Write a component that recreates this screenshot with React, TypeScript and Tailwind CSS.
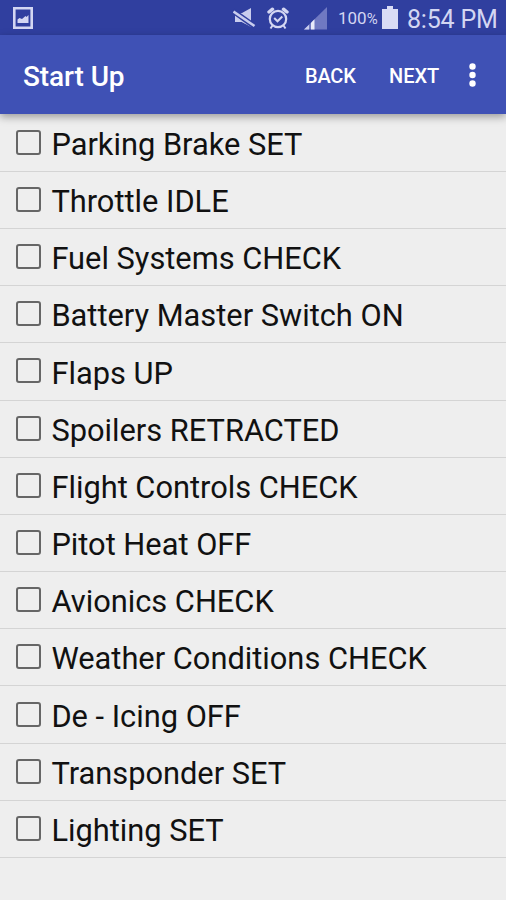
import { useState } from "react";

const checklist = [
  "Parking Brake SET",
  "Throttle IDLE",
  "Fuel Systems CHECK",
  "Battery Master Switch ON",
  "Flaps UP",
  "Spoilers RETRACTED",
  "Flight Controls CHECK",
  "Pitot Heat OFF",
  "Avionics CHECK",
  "Weather Conditions CHECK",
  "De - Icing OFF",
  "Transponder SET",
  "Lighting SET",
];

function PictureIcon() {
  return (
    <svg className="w-5 h-[22px] mt-px" viewBox="0 0 20 22">
      <path d="M1.3 1.3h17.4v19.4H1.3z" fill="none" stroke="#d3d6f2" strokeWidth="2.6" />
      <path d="M4.5 16v-3.5l2-1.5 2.5 1 3.5-3 1 1 2-2v8z" fill="#d3d6f2" />
    </svg>
  );
}

function MuteIcon() {
  return (
    <svg className="w-[23px] h-[21px]" viewBox="0 0 23 21">
      <path d="M2 6h7l9-5v19l-9-5H2z" fill="#c9cdee" />
      <path d="M0 4l21 15" stroke="#303f9f" strokeWidth="5.4" />
      <path d="M.5 4.5l21 14.500" stroke="#c9cdee" strokeWidth="2.6" />
      <path d="M2 9.500v5.500h7l4.500 2.500z" fill="#c9cdee" />
    </svg>
  );
}

function AlarmIcon() {
  return (
    <svg className="w-[22px] h-[23px]" viewBox="0 0 22 23" fill="none" stroke="#d3d6f2">
      <circle cx="11" cy="12" r="8.2" strokeWidth="2.2" />
      <path d="M2 5l3.500-2.800M20 5l-3.500-2.800" strokeWidth="3.4" strokeLinecap="round" />
      <path d="M7.2 11l3.300 3.300 4.800-4.800" strokeWidth="2" />
      <path d="M5.500 18.500l-2 3M16.500 18.500l2 3" strokeWidth="2" />
    </svg>
  );
}

function SignalIcon() {
  return (
    <svg className="w-[23px] h-[23px]" viewBox="0 0 23 23">
      <path d="M0 22.500L23 0v22.500z" fill="#7079c2" />
      <path d="M0 22.500l5-4.800v4.800z" fill="#c9cdee" />
      <path d="M7 22.500v-6.800l3.500-3.500v10.300z" fill="#e8eafa" />
    </svg>
  );
}

function BatteryIcon() {
  return (
    <svg className="w-4 h-[23px]" viewBox="0 0 16 23">
      <path d="M5 0h6v3h5v20H0V3h5z" fill="#d9dbf5" />
    </svg>
  );
}

function StatusBar() {
  return (
    <div className="h-[35px] bg-[#303f9f] flex items-center justify-between pl-[13px] pr-[8px] text-[#d3d6f2]">
      <PictureIcon />
      <div className="flex items-center">
        <MuteIcon />
        <div className="ml-[11px] mr-[15px] pt-[2px]">
          <AlarmIcon />
        </div>
        <div className="pt-[2px]">
          <SignalIcon />
        </div>
        <span className="ml-[11px] mr-1 w-10 text-[17px] whitespace-nowrap pt-[3px]">
          100<span className="text-[15px]">%</span>
        </span>
        <BatteryIcon />
        <span className="ml-[9px] w-[91px] text-[25px] leading-none tracking-[-0.2px] whitespace-nowrap pt-[3px]">
          8:54 PM
        </span>
      </div>
    </div>
  );
}

function Toolbar() {
  return (
    <header className="relative z-10 h-[79px] bg-[#3f51b5] flex items-center pl-[23px] pr-[30px] text-white font-medium shadow-[0_3px_8px_rgba(0,0,0,0.35)]">
      <h1 className="flex-1 text-[28px] tracking-[-0.1px] pt-[4px]">Start Up</h1>
      <button className="w-[52px] text-[20px] tracking-[-0.2px] text-left whitespace-nowrap pt-[2px]">
        BACK
      </button>
      <button className="ml-8 w-[52px] text-[20px] text-left whitespace-nowrap pt-[2px]">
        NEXT
      </button>
      <button className="ml-[28px] w-[7px]" aria-label="More options">
        <svg className="w-[7px] h-6" viewBox="0 0 7 24" fill="#fff">
          <circle cx="3.5" cy="3.5" r="3.2" />
          <circle cx="3.5" cy="12" r="3.2" />
          <circle cx="3.5" cy="20.5" r="3.2" />
        </svg>
      </button>
    </header>
  );
}

export default function App() {
  const [checked, setChecked] = useState<string[]>([]);

  function toggle(item: string) {
    setChecked((prev) =>
      prev.includes(item) ? prev.filter((i) => i !== item) : [...prev, item]
    );
  }

  return (
    <div className="w-full h-screen overflow-hidden bg-[#eeeeee] font-[Roboto,sans-serif]">
      <StatusBar />
      <Toolbar />
      <ul className="pt-[0.6px]">
        {checklist.map((item) => (
          <li
            key={item}
            onClick={() => toggle(item)}
            className="h-[57.2px] border-b border-[#d4d4d4] flex items-center pl-4 pt-[3px]"
          >
            <span
              className={`w-[25px] h-[25px] mb-[4px] rounded-[3px] border-2 border-[#666666] ${
                checked.includes(item) ? "bg-[#3f51b5]" : ""
              }`}
            />
            <span className="ml-[10.4px] pt-[2px] text-[30.8px] leading-none text-[#111111] whitespace-nowrap">
              {item}
            </span>
          </li>
        ))}
      </ul>
    </div>
  );
}
